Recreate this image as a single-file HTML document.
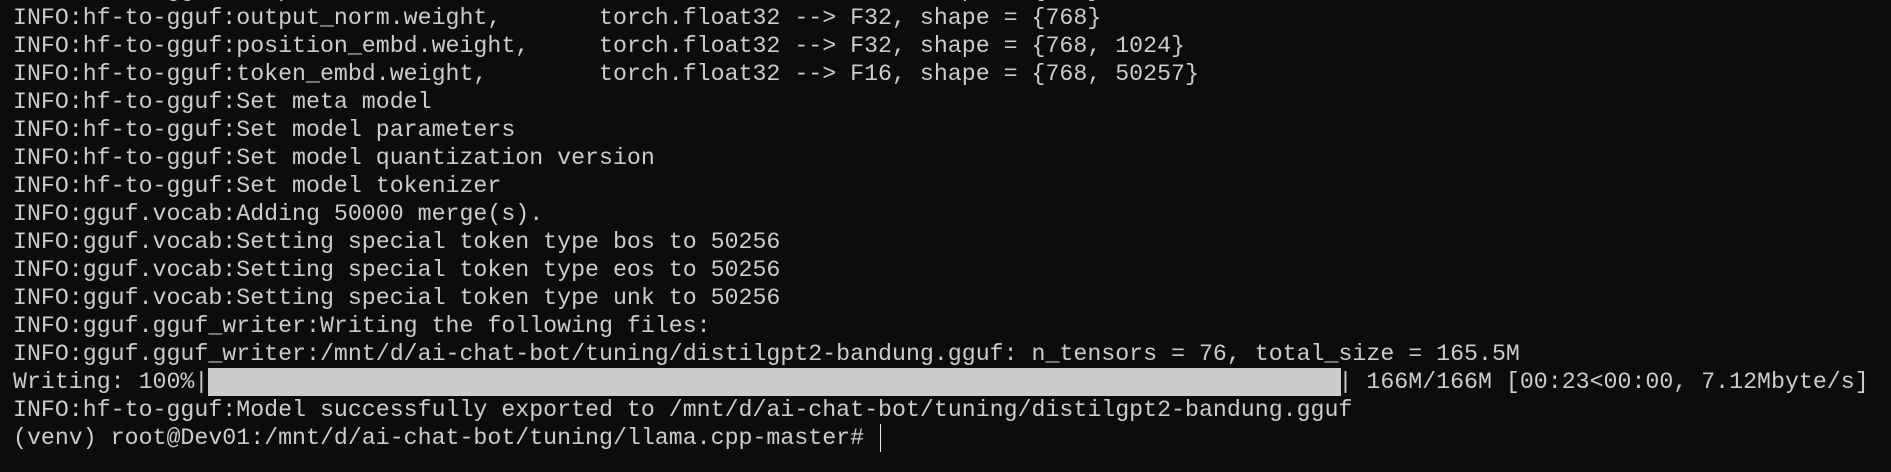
<!DOCTYPE html>
<html><head><meta charset="utf-8"><style>
html,body{margin:0;padding:0;background:#0c0c0c;width:1891px;height:472px;overflow:hidden}
#t{position:absolute;left:13px;top:-24px;font-family:"Liberation Mono","DejaVu Sans Mono",monospace;font-size:23.25px;line-height:28px;color:#cccccc;white-space:pre}
.bar{position:absolute;left:208px;top:368px;width:1133px;height:28px;background:#cccccc}
.cur{position:absolute;left:880px;top:424px;width:1px;height:28px;background:#e8e8e8}
</style></head><body>
<div id="t">INFO:hf-to-gguf:output_norm.bias,         torch.float32 --> F32, shape = {768}
INFO:hf-to-gguf:output_norm.weight,       torch.float32 --> F32, shape = {768}
INFO:hf-to-gguf:position_embd.weight,     torch.float32 --> F32, shape = {768, 1024}
INFO:hf-to-gguf:token_embd.weight,        torch.float32 --> F16, shape = {768, 50257}
INFO:hf-to-gguf:Set meta model
INFO:hf-to-gguf:Set model parameters
INFO:hf-to-gguf:Set model quantization version
INFO:hf-to-gguf:Set model tokenizer
INFO:gguf.vocab:Adding 50000 merge(s).
INFO:gguf.vocab:Setting special token type bos to 50256
INFO:gguf.vocab:Setting special token type eos to 50256
INFO:gguf.vocab:Setting special token type unk to 50256
INFO:gguf.gguf_writer:Writing the following files:
INFO:gguf.gguf_writer:/mnt/d/ai-chat-bot/tuning/distilgpt2-bandung.gguf: n_tensors = 76, total_size = 165.5M
Writing: 100%|                                                                                 | 166M/166M [00:23&lt;00:00, 7.12Mbyte/s]
INFO:hf-to-gguf:Model successfully exported to /mnt/d/ai-chat-bot/tuning/distilgpt2-bandung.gguf
(venv) root@Dev01:/mnt/d/ai-chat-bot/tuning/llama.cpp-master# </div>
<div class="bar"></div>
<div class="cur"></div>
</body></html>
